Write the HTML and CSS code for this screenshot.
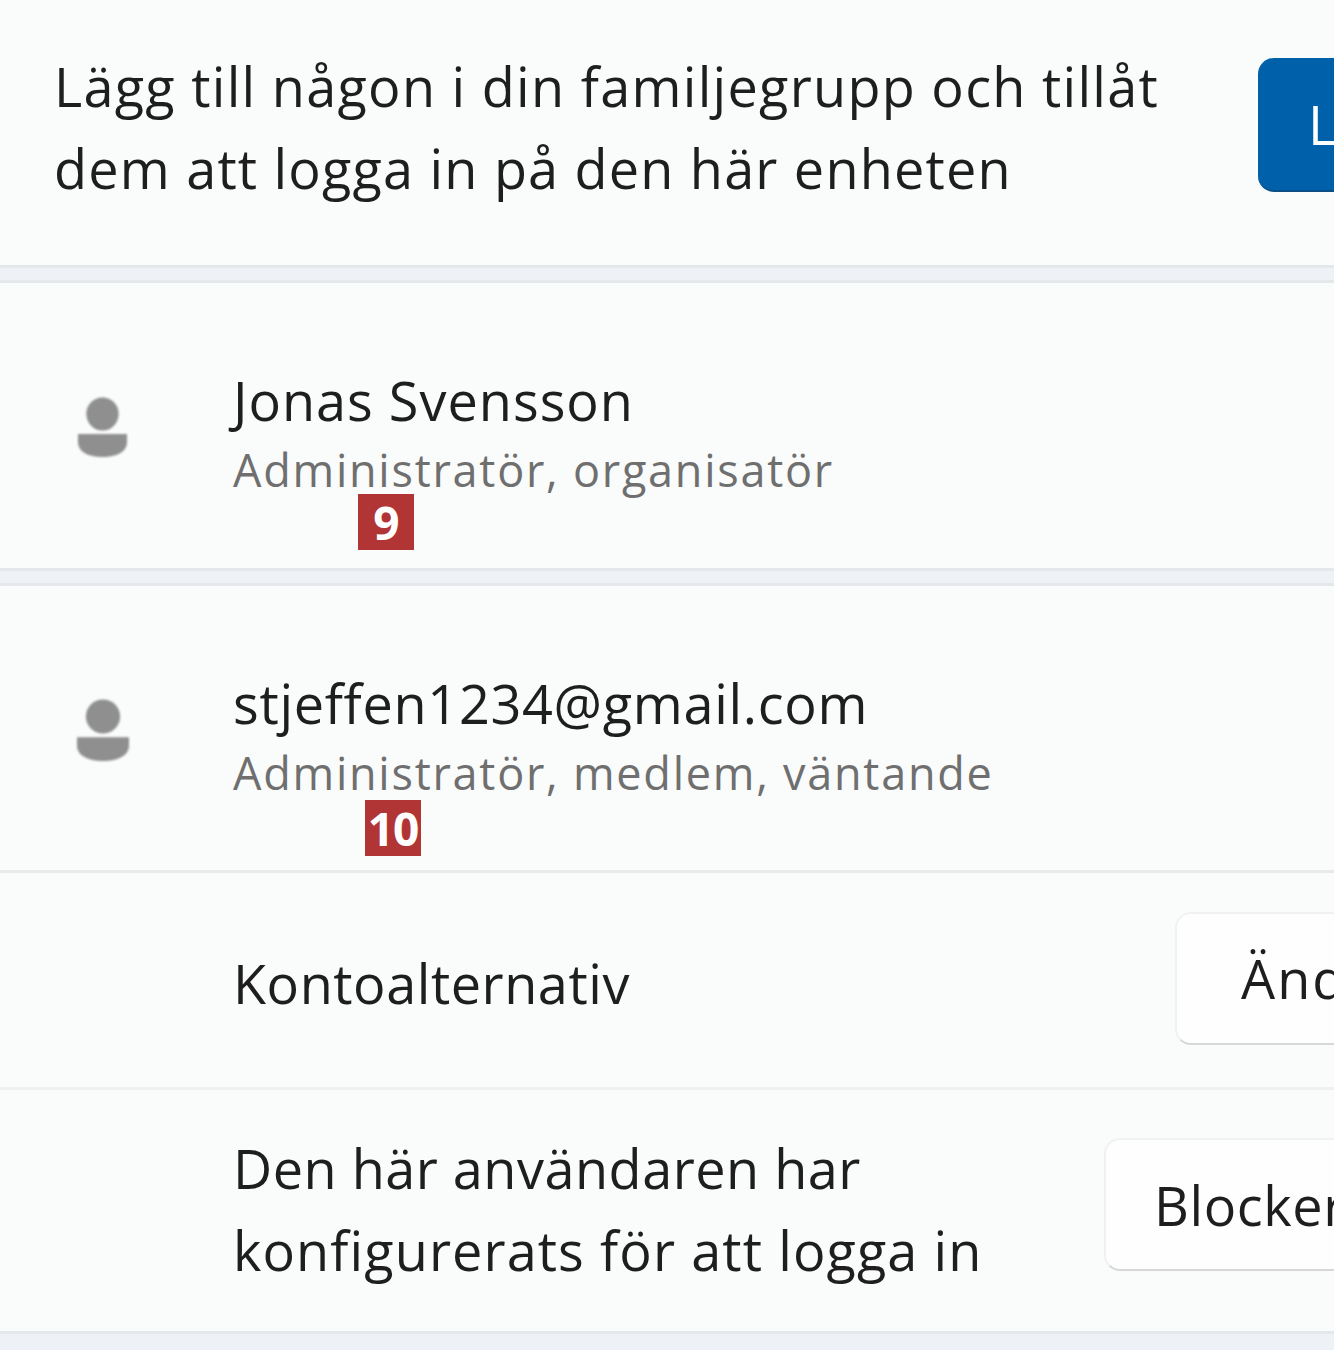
FILE: index.html
```html
<!DOCTYPE html>
<html lang="sv">
<head>
<meta charset="utf-8">
<title>Familj</title>
<link rel="stylesheet" href="styles.css">
</head>
<body>
<main class="page">
  <section class="card add-row">
    <p class="add-text"><span class="add-line-one">Lägg till någon i din familjegrupp och tillåt</span><br>dem att logga in på den här enheten</p>
    <button class="btn primary">Lägg till någon</button>
  </section>
  <section class="card user-row user-one">
    <svg class="avatar" viewBox="0 0 50 60" preserveAspectRatio="none" aria-hidden="true"><circle cx="25" cy="17" r="16.5"/><path d="M0 37h50v8c0 10-11 15-25 15S0 55 0 45z"/></svg>
    <div class="user-info">
      <div class="user-name name-jonas">Jonas Svensson</div>
      <div class="user-role">Administratör, organisatör</div>
      <span class="badge badge-nine">9</span>
    </div>
  </section>
  <section class="card">
    <div class="user-row user-row-open">
      <svg class="avatar avatar-large" viewBox="0 0 50 60" preserveAspectRatio="none" aria-hidden="true"><circle cx="25" cy="17" r="16.5"/><path d="M0 37h50v8c0 10-11 15-25 15S0 55 0 45z"/></svg>
      <div class="user-info">
        <div class="user-name name-email">stjeffen1234@gmail.com</div>
        <div class="user-role">Administratör, medlem, väntande</div>
        <span class="badge badge-ten">10</span>
      </div>
    </div>
    <div class="option-row option-account">
      <div class="option-label option-account-label">Kontoalternativ</div>
      <button class="btn secondary">Ändra kontotyp</button>
    </div>
    <div class="option-row option-block">
      <div class="option-label option-block-label"><span class="line-short">Den här användaren har</span><br><span class="line-long">konfigurerats för att logga in</span></div>
      <button class="btn secondary">Blockera</button>
    </div>
  </section>
  <div class="band"></div>
</main>
</body>
</html>
```

FILE: styles.css
```css
* { box-sizing: border-box; }
html, body { margin: 0; height: 1350px; overflow: hidden; background: #fafbfb; }
body { font-family: "Open Sans", "Noto Sans", sans-serif; color: #1e1e1e; }
.page { width: 1334px; height: 1350px; overflow: hidden; background: #eef1f5; display: flex; flex-direction: column; }
.card { background: #fafbfb; border-bottom: 3px solid #e5e8ea; box-shadow: 0 -3px 0 #e5e8ea; margin-bottom: 15px; flex: none; }
.add-row { height: 268px; display: flex; align-items: flex-start; padding: 45px 0 0 54px; }
.add-text { margin: 0; flex: 0 0 1204px; font-size: 54px; line-height: 82px; letter-spacing: 1.2px; }
.add-line-one { letter-spacing: 1.28px; }
.btn { flex: none; font: inherit; font-size: 54px; white-space: nowrap; border-radius: 16px; text-align: left; }
.primary { margin-top: 13px; height: 134px; background: #0061aa; color: #fff; border: 0; border-bottom: 2px solid #0a4f86; padding: 0 0 0 50px; }
.secondary { background: #fefefe; color: #1e1e1e; border: 2px solid #f0f1f2; border-bottom-color: #d6d7d8; letter-spacing: 0.6px; }
.user-row { display: flex; align-items: flex-start; height: 288px; padding: 82px 0 0 78px; }
.user-row-open { height: 287px; padding: 82px 0 0 77px; border-bottom: 3px solid #e8eaec; }
.avatar { flex: none; width: 49px; height: 60px; margin: 32px 1px 0 0; fill: #8f8f8f; filter: blur(1px); }
.avatar-large { width: 52px; height: 62px; margin: 31px -1px 0 0; }
.user-info { position: relative; margin-left: 105px; }
.user-name { font-size: 54px; line-height: 70px; white-space: nowrap; }
.name-jonas { letter-spacing: 1px; }
.name-email { letter-spacing: 0.7px; }
.user-role { font-size: 45px; line-height: 70px; color: #6f6f6f; white-space: nowrap; letter-spacing: 1.75px; }
.badge { position: absolute; width: 56px; height: 56px; background: #b23535; color: #fff; font-weight: 700; font-size: 46px; line-height: 56px; text-align: center; letter-spacing: -1px; }
.badge-nine { left: 125px; top: 129px; }
.badge-ten { left: 132px; top: 132px; }
.option-row { display: flex; padding-left: 233px; border-bottom: 3px solid #eef0f1; }
.option-row:last-child { border-bottom: 0; }
.option-account { height: 217px; align-items: center; }
.option-account-label { flex: 0 0 942px; letter-spacing: 0.55px; margin-top: 6px; }
.option-account .btn { height: 133px; padding: 0 0 0 64px; margin-top: -4px; letter-spacing: 2px; }
.option-block { height: 241px; align-items: center; }
.option-block-label { flex: 0 0 871px; margin-top: -4px; }
.line-short { letter-spacing: 0.5px; }
.line-long { letter-spacing: 1.1px; }
.option-block .btn { height: 133px; padding: 0 0 0 48px; margin-top: -12px; }
.option-label { font-size: 54px; line-height: 82px; white-space: nowrap; }
.band { flex: 1; }
```
